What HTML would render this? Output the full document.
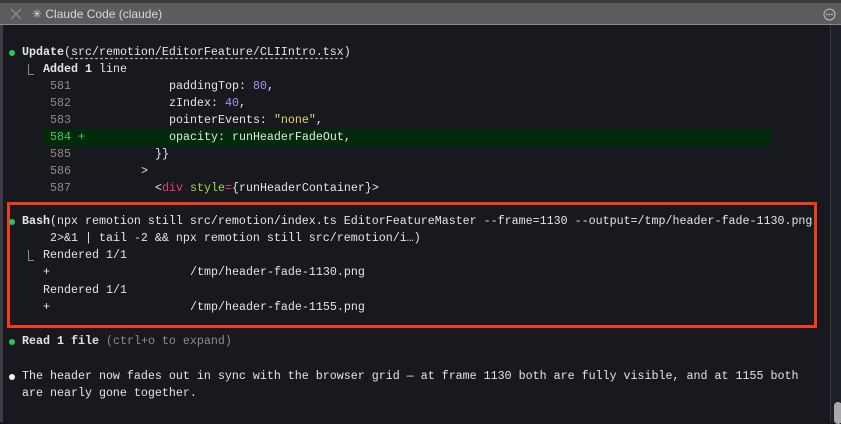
<!DOCTYPE html>
<html><head><meta charset="utf-8"><style>
*{margin:0;padding:0;box-sizing:border-box}
body{width:841px;height:422px;overflow:hidden;background:#17191f;position:relative;font-family:"Liberation Mono",monospace;font-size:11.67px;color:#e4e4e4}
.tb{position:absolute;left:0;top:0;width:841px;height:25px;background:#5c5c5c;border-top:3px solid #3c3c3c;border-bottom:1px solid #8a8a8a}
.tt{position:absolute;left:32px;top:4px;font:12px "Liberation Sans",sans-serif;color:#d8d8d8}
.ls{position:absolute;left:0;top:25px;width:3px;height:397px;background:#3b3e44}
.gut{position:absolute;left:830px;top:25px;width:11px;height:397px;background:#1e2128;border-left:1px solid #33363d}
.thumb{position:absolute;left:834px;top:402px;width:8px;height:22px;background:#a9a9a9;border-radius:4px}
.l{position:absolute;white-space:pre;line-height:17px;height:17px}
.b{font-weight:bold}
.g{color:#8b8b8b}
.n{color:#8b8b8b}
.p{color:#b68cf2}
.y{color:#e3d36c}
.k{color:#f4366f}
.a{color:#a8d834}
.gr{color:#3fcb5d}
.dot{position:absolute;width:6px;height:6px;border-radius:3px;background:#2fc25a}
.box{position:absolute;left:7px;top:202px;width:810px;height:126px;border:3px solid #f03b1f}
.band{position:absolute;left:43px;top:129px;width:728px;height:17px;background:#012a0b}
.u{text-decoration:underline dashed #aaa;text-underline-offset:3px}
.cor{position:absolute;width:6px;height:11px;border-left:1px solid #8b8b8b;border-bottom:1px solid #8b8b8b}
</style></head><body>
<div class="tb"><svg style="position:absolute;left:10px;top:5px" width="12" height="12"><path d="M1 1L11 11M11 1L1 11" stroke="#8a8a8a" stroke-width="1.3"/></svg><div class="tt">✳ Claude Code (claude)</div>
<svg style="position:absolute;left:823px;top:5px" width="13" height="13"><circle cx="6.5" cy="6.5" r="5.5" fill="none" stroke="#bdbdbd" stroke-width="1"/><circle cx="4" cy="6.5" r=".9" fill="#bdbdbd"/><circle cx="6.5" cy="6.5" r=".9" fill="#bdbdbd"/><circle cx="9" cy="6.5" r=".9" fill="#bdbdbd"/></svg></div>
<div class="ls"></div><div class="gut"></div><div class="thumb"></div>
<div class="band"></div>
<div class="box"></div>

<div class="dot" style="left:9px;top:50px"></div>
<div class="l" style="left:22px;top:44px"><span class="b">Update</span>(<span class="u">src/remotion/EditorFeature/CLIIntro.tsx</span>)</div>
<div class="cor" style="left:28px;top:64px"></div>
<div class="l" style="left:43px;top:61px"><span class="b">Added</span> <span class="b">1</span> line</div>
<div class="l n" style="left:50px;top:78px">581</div><div class="l" style="left:169px;top:78px">paddingTop: <span class="p">80</span>,</div>
<div class="l n" style="left:50px;top:95px">582</div><div class="l" style="left:169px;top:95px">zIndex: <span class="p">40</span>,</div>
<div class="l n" style="left:50px;top:112px">583</div><div class="l" style="left:169px;top:112px">pointerEvents: <span class="y">"none"</span>,</div>
<div class="l gr" style="left:50px;top:129px">584 +</div><div class="l" style="left:169px;top:129px">opacity: runHeaderFadeOut,</div>
<div class="l n" style="left:50px;top:146px">585</div><div class="l" style="left:155px;top:146px">}}</div>
<div class="l n" style="left:50px;top:163px">586</div><div class="l" style="left:141px;top:163px">&gt;</div>
<div class="l n" style="left:50px;top:180px">587</div><div class="l" style="left:155px;top:180px">&lt;<span class="k">div</span> <span class="a">style</span><span class="k">=</span>{runHeaderContainer}&gt;</div>

<div class="dot" style="left:9px;top:219px"></div>
<div class="l" style="left:22px;top:213px"><span class="b">Bash</span>(npx remotion still src/remotion/index.ts EditorFeatureMaster --frame=1130 --output=/tmp/header-fade-1130.png</div>
<div class="l" style="left:50px;top:230px">2&gt;&amp;1 | tail -2 &amp;&amp; npx remotion still src/remotion/i…)</div>
<div class="cor" style="left:28px;top:250px"></div>
<div class="l" style="left:43px;top:247px">Rendered 1/1</div>
<div class="l" style="left:43px;top:264px">+</div><div class="l" style="left:190px;top:264px">/tmp/header-fade-1130.png</div>
<div class="l" style="left:43px;top:282px">Rendered 1/1</div>
<div class="l" style="left:43px;top:299px">+</div><div class="l" style="left:190px;top:299px">/tmp/header-fade-1155.png</div>

<div class="dot" style="left:9px;top:339px"></div>
<div class="l" style="left:22px;top:333px"><span class="b">Read</span> <span class="b">1</span> <span class="b">file</span> <span class="g">(ctrl+o to expand)</span></div>

<div class="dot" style="left:9px;top:374px;background:#f0f0f0"></div>
<div class="l" style="left:22px;top:368px">The header now fades out in sync with the browser grid — at frame 1130 both are fully visible, and at 1155 both</div>
<div class="l" style="left:22px;top:385px">are nearly gone together.</div>
</body></html>
